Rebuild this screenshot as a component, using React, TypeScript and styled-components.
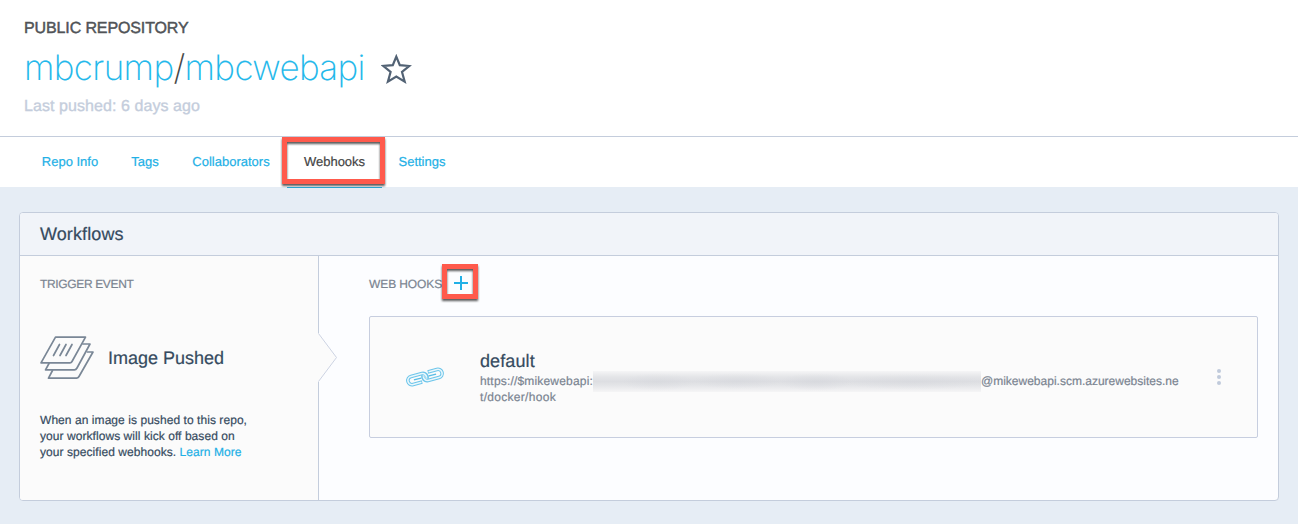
import React from 'react';
import styled, { createGlobalStyle } from 'styled-components';

const GlobalStyle = createGlobalStyle`
  * { box-sizing: border-box; }
  body {
    margin: 0;
    background: #e6edf5;
    font-family: "Helvetica Neue", "Liberation Sans", Arial, sans-serif;
    color: #364b5f;
    text-rendering: geometricPrecision;
  }
`;

const Page = styled.div`
  display: flex;
  flex-direction: column;
  width: 100%;
  height: 524px;
  overflow: hidden;
`;

const Header = styled.header`
  display: flex;
  flex-direction: column;
  align-items: flex-start;
  height: 137px;
  padding: 19px 24px 0;
  background: #fff;
  border-bottom: 1px solid #c4cddc;
`;

const Visibility = styled.div`
  font-size: 16px;
  line-height: 20px;
  color: #505357;
  -webkit-text-stroke: 0.45px #505357;
  letter-spacing: -0.12px;
`;

const TitleRow = styled.div`
  display: flex;
  align-items: center;
  height: 56px;
  margin-top: 1px;
`;

const Title = styled.h1`
  margin: 0;
  width: 341px;
  font-family: Inter, "Liberation Sans", sans-serif;
  font-size: 35px;
  font-weight: 200;
  line-height: 56px;
  letter-spacing: -0.64px;
  white-space: nowrap;
  color: #22b8eb;
  -webkit-text-stroke: 0.1px currentColor;
`;

const Slash = styled.span`
  color: #444;
`;

const Star = styled.svg`
  margin: 1px 0 0 16px;
`;

const Pushed = styled.div`
  font-size: 16px;
  line-height: 20px;
  margin-top: 1px;
  letter-spacing: 0.07px;
  color: #c4cddc;
  -webkit-text-stroke: 0.35px #c4cddc;
`;

const Tabs = styled.nav`
  display: flex;
  height: 50px;
  padding-left: 25px;
  background: #fff;
`;

const Tab = styled.a<{ $width: number; $active?: boolean }>`
  position: relative;
  display: flex;
  justify-content: center;
  width: ${(p) => p.$width}px;
  font-size: 13px;
  line-height: 49px;
  white-space: nowrap;
  color: ${(p) => (p.$active ? '#444' : '#22b0e6')};
  -webkit-text-stroke: 0.2px currentColor;
  ${(p) =>
    p.$active &&
    `&::after {
      content: '';
      position: absolute;
      left: 0;
      right: 0;
      bottom: -1px;
      height: 1px;
      background: #2ba3cf;
    }`}
`;

const Highlight = styled.span<{ $top: number; $left: number; $width: number; $height: number }>`
  position: absolute;
  top: ${(p) => p.$top}px;
  left: ${(p) => p.$left}px;
  width: ${(p) => p.$width}px;
  height: ${(p) => p.$height}px;
  border: 5px solid #ff5a4c;
  filter: drop-shadow(0 2px 1px rgba(0, 0, 0, 0.65));
`;

const Panel = styled.section`
  display: flex;
  flex-direction: column;
  height: 289px;
  margin: 25px 19px 0;
  border: 1px solid #c4cddc;
  border-radius: 4px;
  background: #fcfdff;
  overflow: hidden;
`;

const PanelHeader = styled.h2`
  margin: 0;
  height: 43px;
  padding-left: 20px;
  border-bottom: 1px solid #c4cddc;
  background: #f1f4f9;
  font-size: 18px;
  font-weight: 400;
  line-height: 42px;
  letter-spacing: 0.1px;
  -webkit-text-stroke: 0.2px currentColor;
`;

const Columns = styled.div`
  display: flex;
  flex: 1;
`;

const Trigger = styled.div`
  position: relative;
  width: 299px;
  padding: 19px 20px 0;
  background: #fbfbfb;
  border-right: 1px solid #c4cddc;
`;

const Arrow = styled.svg`
  position: absolute;
  top: 77px;
  left: 297px;
`;

const Label = styled.div<{ $spacing: number }>`
  font-size: 12px;
  line-height: 18px;
  color: #7a8491;
  white-space: nowrap;
  letter-spacing: ${(p) => p.$spacing}px;
  -webkit-text-stroke: 0.2px currentColor;
`;

const EventRow = styled.div`
  display: flex;
  align-items: center;
  gap: 14px;
  height: 44px;
  margin-top: 43px;
  font-size: 18px;
  white-space: nowrap;
  -webkit-text-stroke: 0.2px currentColor;
`;

const Help = styled.p`
  margin: 32px 0 0;
  font-size: 12px;
  line-height: 16px;
  letter-spacing: 0.06px;
  white-space: nowrap;
  -webkit-text-stroke: 0.2px currentColor;
`;

const Link = styled.a`
  color: #22b0e6;
`;

const Hooks = styled.div`
  flex: 1;
  padding: 19px 20px 0 50px;
`;

const HooksHead = styled.div`
  position: relative;
  display: flex;
  align-items: center;
  height: 18px;
`;

const AddIcon = styled.svg`
  position: absolute;
  left: 84px;
  top: 0;
`;

const HookCard = styled.article`
  display: flex;
  align-items: center;
  height: 122px;
  margin-top: 23px;
  padding: 0 36px 0 35px;
  border: 1px solid #c7cedf;
  border-radius: 2px;
  background: #fbfbfb;
`;

const HookText = styled.div`
  width: 700px;
  margin-left: 35px;
  padding-top: 1px;
`;

const HookName = styled.div`
  padding-bottom: 1px;
  font-size: 18px;
  line-height: 22px;
  letter-spacing: 0.1px;
  -webkit-text-stroke: 0.2px currentColor;
`;

const Url = styled.div`
  display: flex;
  align-items: center;
  height: 16px;
  font-size: 12px;
  white-space: nowrap;
  color: #7a8491;
  -webkit-text-stroke: 0.2px currentColor;
`;

const UrlPart = styled.span<{ $spacing?: number; $width?: number }>`
  flex: none;
  letter-spacing: ${(p) => p.$spacing ?? 0}px;
  ${(p) => p.$width && `width: ${p.$width}px;`}
`;

const Redacted = styled.span`
  flex: none;
  width: 388px;
  height: 21px;
  background:
    radial-gradient(ellipse 36px 9px at 65px 11px, #d0d2d855, transparent),
    radial-gradient(ellipse 45px 8px at 145px 10px, #d0d2d855, transparent),
    radial-gradient(ellipse 36px 9px at 223px 11px, #d0d2d866, transparent),
    radial-gradient(ellipse 70px 8px at 320px 11px, #d0d2d855, transparent),
    linear-gradient(#f5f5f6, #e4e5e8 28%, #dddee2 50%, #e4e5e8 68%, #f5f5f6);
`;

const Dots = styled.div`
  display: flex;
  flex-direction: column;
  gap: 2px;
  margin-left: auto;
`;

const Dot = styled.i`
  width: 4px;
  height: 4px;
  border-radius: 50%;
  background: #c0cadb;
`;

const StackIcon = () => (
  <svg width="54" height="44" viewBox="0 0 54 44" fill="none" stroke="#7a8796" strokeWidth="1.7" strokeLinejoin="round" strokeLinecap="round">
    <path d="M15.5 1.2H45.5L32 25.5Q31.3 26.8 30 26.8H1Z" />
    <path d="M43 8H50L37 32Q36 33.8 34.5 33.8H5.5L9 27.5" />
    <path d="M47.5 16H53L39 40.5Q38 42.2 36.5 42.2H8.5L12.5 34.5" />
    <path d="M19.5 8.5 13.5 19.5M26 8.5 20 19.5M32 8.5 26 19.5" />
  </svg>
);

const ChainIcon = () => (
  <svg width="40" height="24" viewBox="0 0 40 24" fill="none">
    <g transform="translate(20 12) rotate(-15)" strokeLinecap="butt">
      <g stroke="#6cc5ea" strokeWidth="3.6">
        <path d="M-4 4.2H-13.4A4.2 4.2 0 0 1 -13.4 -4.2H-2A4.2 4.2 0 0 1 1.6 2" />
        <path d="M4 -4.2H13.4A4.2 4.2 0 0 1 13.4 4.2H2A4.2 4.2 0 0 1 -1.6 -2" />
      </g>
      <g stroke="#eaf7fc" strokeWidth="1.6">
        <path d="M-4.8 4.2H-13.4A4.2 4.2 0 0 1 -13.4 -4.2H-2A4.2 4.2 0 0 1 1.4 1.2" />
        <path d="M4.8 -4.2H13.4A4.2 4.2 0 0 1 13.4 4.2H2A4.2 4.2 0 0 1 -1.4 -1.2" />
      </g>
      <path d="M-11.5 0H-4M4 0H11.5" stroke="#58bce5" strokeWidth="1.3" />
    </g>
  </svg>
);

export default function App() {
  return (
    <Page>
      <GlobalStyle />
      <Header>
        <Visibility>PUBLIC REPOSITORY</Visibility>
        <TitleRow>
          <Title>mbcrump<Slash>/</Slash>mbcwebapi</Title>
          <Star width="31" height="30" viewBox="0 0 31 30" fill="none" stroke="#526274" strokeWidth="2.2">
            <path d="M15.3 2.6 18.8 11.2 28.2 12 21 18 23.7 27.6 15.3 22.6 6.9 27.6 9.6 18 2.4 12 11.8 11.2Z" />
          </Star>
        </TitleRow>
        <Pushed>Last pushed: 6 days ago</Pushed>
      </Header>
      <Tabs>
        <Tab $width={90}>Repo Info</Tab>
        <Tab $width={60}>Tags</Tab>
        <Tab $width={112}>Collaborators</Tab>
        <Tab $width={95} $active>
          Webhooks
          <Highlight $top={0} $left={-5} $width={103} $height={47} />
        </Tab>
        <Tab $width={80}>Settings</Tab>
      </Tabs>
      <Panel>
        <PanelHeader>Workflows</PanelHeader>
        <Columns>
          <Trigger>
            <Label $spacing={-0.35}>TRIGGER EVENT</Label>
            <EventRow>
              <StackIcon />
              Image Pushed
            </EventRow>
            <Help>
              When an image is pushed to this repo,<br />
              your workflows will kick off based on<br />
              your specified webhooks. <Link>Learn More</Link>
            </Help>
            <Arrow width="22" height="50" viewBox="0 0 22 50">
              <path d="M0 0H1.5L19.5 24.5 1.5 49H0Z" fill="#fbfbfb" />
              <path d="M1.5 0.5 19.5 24.5 1.5 48.5" fill="none" stroke="#cdd4e3" />
            </Arrow>
          </Trigger>
          <Hooks>
            <HooksHead>
              <Label $spacing={-0.1}>WEB HOOKS</Label>
              <AddIcon width="15" height="15" viewBox="0 0 15 15" stroke="#22b0e6" strokeWidth="2">
                <path d="M8 1V15M1 8H15" />
              </AddIcon>
              <Highlight $top={-11} $left={73} $width={36} $height={35} />
            </HooksHead>
            <HookCard>
              <ChainIcon />
              <HookText>
                <HookName>default</HookName>
                <Url>
                  <UrlPart $width={113} $spacing={0.18}>https://$mikewebapi:</UrlPart>
                  <Redacted />
                  <UrlPart>@mikewebapi.scm.azurewebsites.ne</UrlPart>
                </Url>
                <Url><UrlPart $spacing={0.3}>t/docker/hook</UrlPart></Url>
              </HookText>
              <Dots><Dot /><Dot /><Dot /></Dots>
            </HookCard>
          </Hooks>
        </Columns>
      </Panel>
    </Page>
  );
}
